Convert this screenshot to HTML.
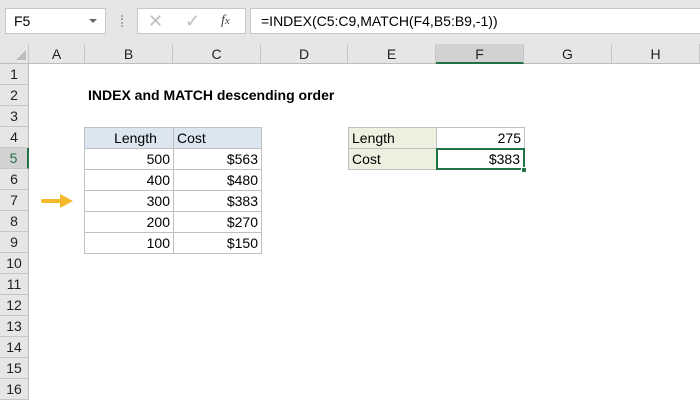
<!DOCTYPE html>
<html><head><style>
*{margin:0;padding:0;box-sizing:border-box}
body{width:700px;height:400px;background:#fff;position:relative;overflow:hidden;font-family:"Liberation Sans",sans-serif;font-size:13px;color:#000}
.a{position:absolute}
.top{left:0;top:0;width:700px;height:44px;background:#e6e6e6}
.box{background:#fff;border:1px solid #c6c6c6}
.ch{top:44px;height:20px;background:#e6e6e6;border-right:1px solid #c6c6c6;border-bottom:1px solid #bdbdbd;text-align:center;line-height:20px;font-size:14px;color:#222}
.rh{left:0;width:29px;height:21px;background:#e6e6e6;border-right:1px solid #bdbdbd;border-bottom:1px solid #c6c6c6;text-align:center;line-height:21px;font-size:14px;color:#222}
.c{height:22px;border:1px solid #c0c0c0;line-height:20px;padding:0 3px;font-size:14px}
.r{text-align:right}
</style></head><body>
<div class="a top"></div>
<div class="a box" style="left:5px;top:8px;width:101px;height:26px;line-height:24px;padding-left:8px;font-size:14px">F5</div>
<div class="a" style="left:89px;top:19px;border-left:4px solid transparent;border-right:4px solid transparent;border-top:4px solid #666"></div>
<div class="a" style="left:121px;top:15px;width:2px;height:12px;border-left:2px dotted #aaa"></div>
<div class="a box" style="left:137px;top:8px;width:109px;height:26px"></div>
<div class="a" style="left:148px;top:8px;font-size:18px;color:#c0c0c0;line-height:26px">✕</div>
<div class="a" style="left:185px;top:8px;font-size:18px;color:#c0c0c0;line-height:26px">✓</div>
<div class="a" style="left:221px;top:8px;font-size:14px;font-style:italic;font-family:'Liberation Serif',serif;color:#444;line-height:26px"><i>f</i><span style="font-size:11px">x</span></div>
<div class="a box" style="left:250px;top:8px;width:452px;height:26px;line-height:24px;padding-left:10px;font-size:14px">=INDEX(C5:C9,MATCH(F4,B5:B9,-1))</div>

<div class="a ch" style="left:0;width:29px"></div>
<div class="a" style="left:16px;top:50px;border-left:10px solid transparent;border-bottom:10px solid #bdbdbd"></div>
<div class="a ch" style="left:29px;width:56px">A</div>
<div class="a ch" style="left:85px;width:88px">B</div>
<div class="a ch" style="left:173px;width:88px">C</div>
<div class="a ch" style="left:261px;width:87px">D</div>
<div class="a ch" style="left:348px;width:88px">E</div>
<div class="a ch" style="left:436px;width:88px;background:#d2d2d2;border-bottom:2px solid #217346;color:#222">F</div>
<div class="a ch" style="left:524px;width:88px">G</div>
<div class="a ch" style="left:612px;width:88px">H</div>

<div class="a rh" style="top:64px">1</div><div class="a rh" style="top:85px">2</div><div class="a rh" style="top:106px">3</div><div class="a rh" style="top:127px">4</div>
<div class="a rh" style="top:148px;background:#d2d2d2;border-right:2px solid #217346;color:#217346">5</div>
<div class="a rh" style="top:169px">6</div><div class="a rh" style="top:190px">7</div><div class="a rh" style="top:211px">8</div><div class="a rh" style="top:232px">9</div><div class="a rh" style="top:253px">10</div><div class="a rh" style="top:274px">11</div><div class="a rh" style="top:295px">12</div><div class="a rh" style="top:316px">13</div><div class="a rh" style="top:337px">14</div><div class="a rh" style="top:358px">15</div><div class="a rh" style="top:379px">16</div>

<div class="a" style="left:88px;top:85px;line-height:21px;font-weight:bold;font-size:14px">INDEX and MATCH descending order</div>

<div class="a c r" style="left:84px;top:127px;width:90px;background:#dce6f1;text-align:center;padding-left:16px">Length</div>
<div class="a c" style="left:173px;top:127px;width:89px;background:#dce6f1">Cost</div>
<div class="a c r" style="left:84px;top:148px;width:90px">500</div><div class="a c r" style="left:173px;top:148px;width:89px">$563</div>
<div class="a c r" style="left:84px;top:169px;width:90px">400</div><div class="a c r" style="left:173px;top:169px;width:89px">$480</div>
<div class="a c r" style="left:84px;top:190px;width:90px">300</div><div class="a c r" style="left:173px;top:190px;width:89px">$383</div>
<div class="a c r" style="left:84px;top:211px;width:90px">200</div><div class="a c r" style="left:173px;top:211px;width:89px">$270</div>
<div class="a c r" style="left:84px;top:232px;width:90px">100</div><div class="a c r" style="left:173px;top:232px;width:89px">$150</div>

<div class="a" style="left:41px;top:199px;width:20px;height:4px;background:#f4b82a;border-radius:2px"></div>
<div class="a" style="left:60px;top:194px;border-top:7px solid transparent;border-bottom:7px solid transparent;border-left:13px solid #f4b82a"></div>

<div class="a c" style="left:348px;top:127px;width:89px;background:#ebf1de">Length</div>
<div class="a c r" style="left:436px;top:127px;width:89px">275</div>
<div class="a c" style="left:348px;top:148px;width:89px;background:#ebf1de">Cost</div>
<div class="a c r" style="left:436px;top:148px;width:89px;border:2px solid #217346;line-height:18px">$383</div>
<div class="a" style="left:521px;top:167px;width:6px;height:6px;background:#217346;border:1px solid #fff"></div>
</body></html>
